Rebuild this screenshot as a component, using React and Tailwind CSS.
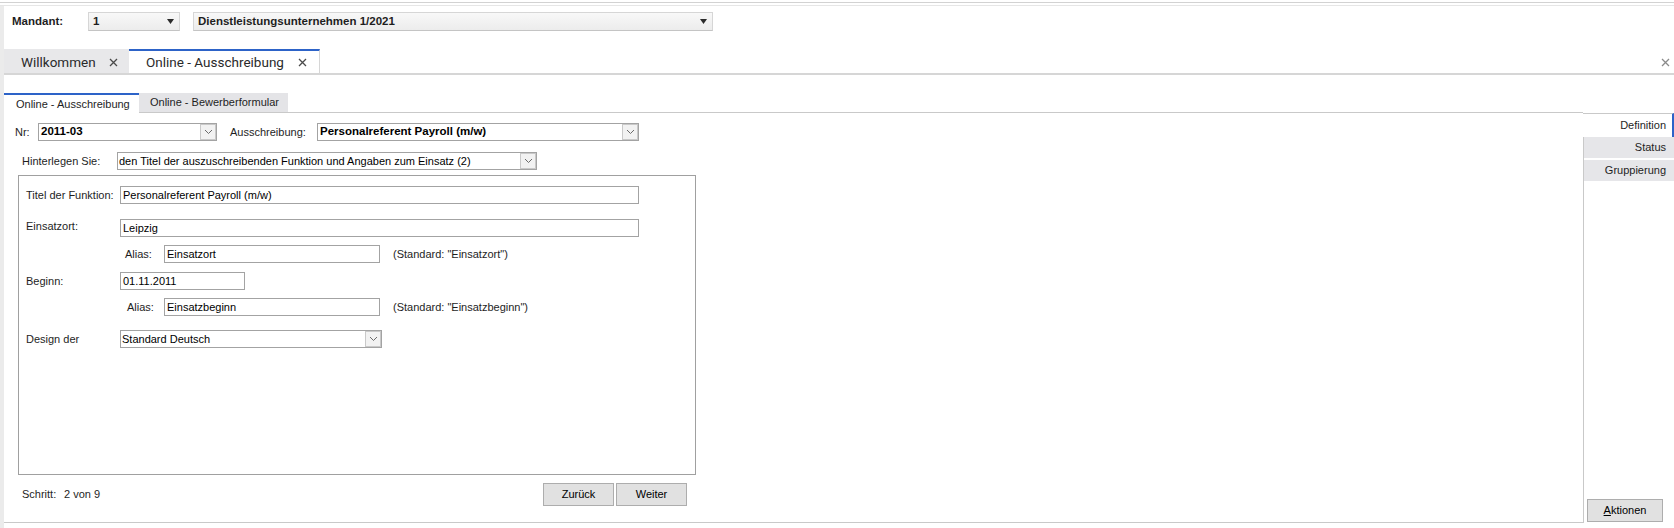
import React from 'react';

const Chevron = () => (
  <svg width="9" height="6" viewBox="0 0 9 6" className="mt-[4px]">
    <path d="M1 1 L4.5 4.5 L8 1" fill="none" stroke="#6b6b6b" strokeWidth="1" />
  </svg>
);

const Triangle = () => (
  <svg width="7" height="5" viewBox="0 0 7 5">
    <path d="M0 0 H7 L3.5 5 Z" fill="#2b2b2b" />
  </svg>
);

const CloseX = ({ color = '#4a4a4a' }) => (
  <svg width="9" height="9" viewBox="0 0 9 9">
    <path d="M1 1 L8 8 M8 1 L1 8" stroke={color} strokeWidth="1.3" />
  </svg>
);

function Field({ w, children }) {
  return (
    <div className={`h-[18px] border border-[#a3a3a3] bg-white pl-[2px] flex items-center text-[11px] text-black whitespace-nowrap overflow-hidden ${w}`}>
      {children}
    </div>
  );
}

function Combo({ w, bold, children }) {
  return (
    <div className={`h-[18px] border border-[#a3a3a3] bg-white flex items-center text-[11px] text-black ${w}`}>
      <div className={`flex-1 pl-[2px] whitespace-nowrap overflow-hidden ${bold ? 'font-bold text-[11.5px]' : 'pl-px'}`}>{children}</div>
      <div className="w-[16px] h-[16px] border border-[#c9c9c9] bg-[#f2f2f2] flex items-start justify-center">
        <Chevron />
      </div>
    </div>
  );
}

function MandantBox({ w, children }) {
  return (
    <div className={`h-[19px] border border-[#d6d6d6] border-b-[#c4c4c4] bg-gradient-to-b from-[#f8f8f8] to-[#ececec] flex items-center pl-[4px] pr-[5px] text-[11.5px] font-bold text-[#1e1e1e] ${w}`}>
      <span className="flex-1 whitespace-nowrap">{children}</span>
      <Triangle />
    </div>
  );
}

export default function App() {
  return (
    <div className="w-[1674px] h-[528px] overflow-hidden bg-white flex flex-col font-['Liberation_Sans',Arial,sans-serif] text-[11px] text-[#1e1e1e]">
      <div className="h-[2px]" />
      <div className="h-px bg-[#d2d2d2]" />
      <div className="h-[2px]" />
      <div className="h-px bg-[#e6e6e6]" />

      <div className="flex-1 flex min-h-0">
        <div className="w-[4px] bg-[#ebebeb]" />

        <div className="flex-1 flex flex-col min-w-0">
          {/* Mandant */}
          <div className="flex items-center pt-[6px] pl-[8px]">
            <span className="w-[76px] font-bold text-[11.5px]">Mandant:</span>
            <MandantBox w="w-[92px]">1</MandantBox>
            <div className="w-[13px]" />
            <MandantBox w="w-[520px]">Dienstleistungsunternehmen 1/2021</MandantBox>
          </div>

          {/* document tabs */}
          <div className="mt-[18px] h-[24px] flex items-stretch font-['Roboto',Arial,sans-serif] text-[13.5px] text-[#2a2a2a]">
            <div className="w-[125px] bg-[#e8e8ea] flex items-center pl-[17px] pt-[2px]">
              <span>Willkommen</span>
              <span className="ml-[13px] mt-px"><CloseX /></span>
            </div>
            <div className="w-[191px] bg-white border-t-2 border-[#2d63c8] border-r border-r-[#d6d6d6] flex items-center pl-[17px]">
              <span>Online - Ausschreibung</span>
              <span className="ml-[14px] mt-px"><CloseX /></span>
            </div>
            <div className="flex-1" />
            <div className="flex items-center pr-[4px] pt-[2px]"><CloseX color="#8a8a8a" /></div>
          </div>
          <div className="h-[2px] bg-[#d6d6d6]" />
          <div className="h-[18px]" />

          <div className="flex-1 flex min-h-0">
            {/* left content */}
            <div className="flex-1 flex flex-col border-b border-[#c9c9c9]">
              <div className="h-[20px] flex items-stretch text-[11px]">
                <div className="w-[135px] bg-white border-t-2 border-[#2d63c8] flex items-center pl-[12px]">Online - Ausschreibung</div>
                <div className="w-[149px] bg-[#e4e4e7] border-b border-[#c9c9c9] flex items-center pl-[11px]">Online - Bewerberformular</div>
                <div className="flex-1 border-b border-[#c9c9c9]" />
              </div>

              <div className="pt-[10px] flex items-center">
                <span className="w-[34px] pl-[11px]">Nr:</span>
                <Combo w="w-[179px]" bold>2011-03</Combo>
                <span className="w-[100px] pl-[13px]">Ausschreibung:</span>
                <Combo w="w-[322px]" bold>Personalreferent Payroll (m/w)</Combo>
              </div>

              <div className="mt-[11px] flex items-center">
                <span className="w-[113px] pl-[18px]">Hinterlegen Sie:</span>
                <Combo w="w-[420px]">den Titel der auszuschreibenden Funktion und Angaben zum Einsatz (2)</Combo>
              </div>

              <div className="mt-[5px] ml-[14px] w-[678px] h-[300px] border border-[#a0a0a0] flex flex-col pl-[7px] pt-[10px]">
                <div className="flex items-center">
                  <span className="w-[94px]">Titel der Funktion:</span>
                  <Field w="w-[519px]">Personalreferent Payroll (m/w)</Field>
                </div>
                <div className="mt-[15px] flex items-center">
                  <span className="w-[94px] -mt-[3px]">Einsatzort:</span>
                  <Field w="w-[519px]">Leipzig</Field>
                </div>
                <div className="mt-[8px] flex items-center pl-[99px]">
                  <span className="w-[39px]">Alias:</span>
                  <Field w="w-[216px]">Einsatzort</Field>
                  <span className="ml-[13px]">(Standard: "Einsatzort")</span>
                </div>
                <div className="mt-[9px] flex items-center">
                  <span className="w-[94px]">Beginn:</span>
                  <Field w="w-[125px]">01.11.2011</Field>
                </div>
                <div className="mt-[8px] flex items-center pl-[101px]">
                  <span className="w-[37px]">Alias:</span>
                  <Field w="w-[216px]">Einsatzbeginn</Field>
                  <span className="ml-[13px]">(Standard: "Einsatzbeginn")</span>
                </div>
                <div className="mt-[14px] flex items-center">
                  <span className="w-[94px] whitespace-nowrap">Design der</span>
                  <Combo w="w-[262px]">Standard Deutsch</Combo>
                </div>
              </div>

              <div className="mt-[8px] h-[23px] flex items-center">
                <span className="pl-[18px] w-[60px]">Schritt:</span>
                <span>2 von 9</span>
                <div className="flex-1" />
                <div className="flex gap-[2px] mr-[896px]">
                  <button className="w-[71px] h-[23px] border border-[#adadad] bg-[#e1e1e1] text-[11px] text-black">Zurück</button>
                  <button className="w-[71px] h-[23px] border border-[#adadad] bg-[#e1e1e1] text-[11px] text-black">Weiter</button>
                </div>
              </div>
              <div className="flex-1" />
            </div>

            {/* right panel */}
            <div className="w-[91px] flex flex-col pt-[20px]">
              <div className="h-[24px] bg-white border-t border-[#c9c9c9] border-r-2 border-r-[#2d63c8] flex items-center justify-end pr-[6px] text-[11px]">Definition</div>
              <div className="flex-1 flex flex-col border-l border-[#c9c9c9]">
                <div className="h-[21px] bg-[#e6e6e9] flex items-center justify-end pr-[8px]">Status</div>
                <div className="h-[2px]" />
                <div className="h-[21px] bg-[#e6e6e9] flex items-center justify-end pr-[8px]">Gruppierung</div>
                <div className="flex-1" />
                <button className="ml-[3px] mb-[1px] w-[76px] h-[23px] border border-[#adadad] bg-[#e1e1e1] text-[11px] text-black"><u>A</u>ktionen</button>
              </div>
            </div>
          </div>
          <div className="h-[5px]" />
        </div>
      </div>
    </div>
  );
}
